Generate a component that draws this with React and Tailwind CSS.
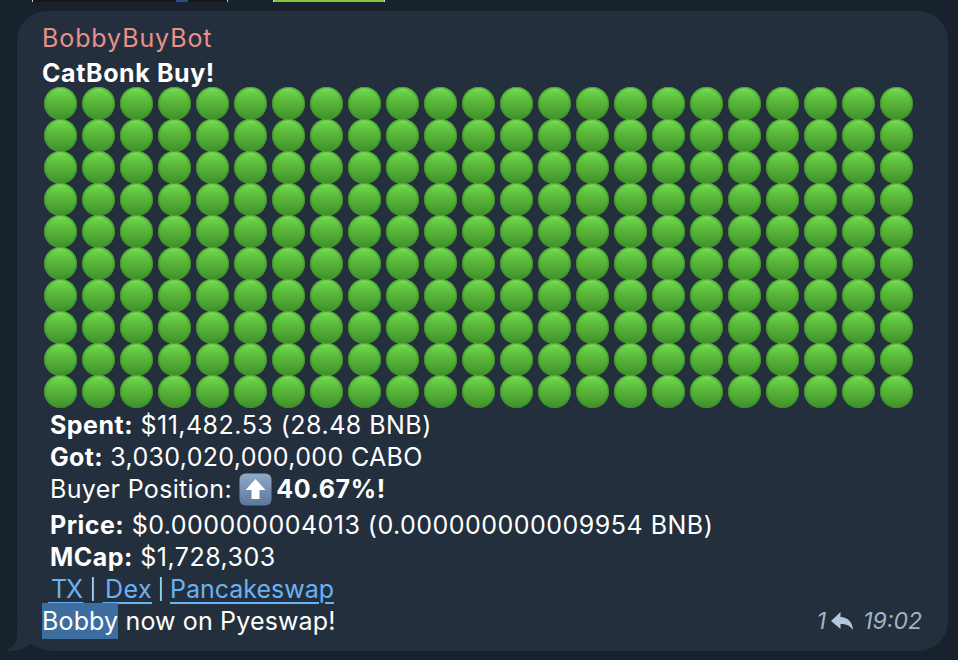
const rows = Array.from({ length: 10 });
const cols = Array.from({ length: 23 });

function GreenDot() {
  return (
    <div className="h-[33px] w-[33px] rounded-full bg-[linear-gradient(#8af06a_0%,#6ad24a_14%,#58b73a_45%,#4ba231_75%,#3f8f2a_100%)] shadow-[inset_0_0_2px_1px_#3f8e2a]" />
  );
}

function UpArrow() {
  return (
    <svg width="33" height="33" viewBox="0 0 33 33" className="shrink-0">
      <defs>
        <linearGradient id="key" x1="0" y1="0" x2="0" y2="1">
          <stop offset="0" stopColor="#8eaac8" />
          <stop offset="1" stopColor="#5c7899" />
        </linearGradient>
      </defs>
      <rect x="0.5" y="0.5" width="32" height="32" rx="6" fill="url(#key)" />
      <path d="M16.5 6 L26.5 17 H20.5 V26 H12.5 V17 H6.5 Z" fill="#fff" />
    </svg>
  );
}

const linkClass = 'text-[#6ab2f2] underline decoration-2 underline-offset-[4px]';

function Pipe({ width }) {
  return <span className={`text-center text-[20px] font-light ${width}`}>|</span>;
}

export default function App() {
  return (
    <div className="relative h-[660px] w-[958px] overflow-hidden bg-[#18222d] font-['Inter',sans-serif] text-[25px] leading-[32px] text-white">
      <div className="flex h-[2px] pl-[32px]">
        <div className="flex w-[196px] border-x border-[#d8d8d8] bg-[#14141a]">
          <div className="ml-[143px] w-[12px] bg-[#2b4a8a]" />
        </div>
        <div className="ml-[45px] w-[112px] border-x border-[#d8d8d8] bg-[#8cc63f]" />
      </div>

      <div className="relative ml-[17px] mt-[9px] h-[640px] w-[931px] rounded-[30px] rounded-bl-[36px] bg-[#242f3d] pl-[25px] pt-[11px]">
        <div className="tracking-[0.9px] text-[#ea8f8a]">BobbyBuyBot</div>
        <div className="mt-[3px] font-bold tracking-[0.6px]">CatBonk Buy!</div>

        <div className="ml-[2px] mt-[-2px] grid grid-cols-[repeat(23,38px)] auto-rows-[32px]">
          {rows.map((_, r) =>
            cols.map((_, c) => <GreenDot key={`${r}-${c}`} />)
          )}
        </div>

        <div className="mt-[2px] pl-[8px] tracking-[0.48px]">
          <div><b className="font-bold">Spent:</b> $11,482.53 (28.48 BNB)</div>
          <div className="tracking-[0.33px]"><b className="font-bold">Got:</b> 3,030,020,000,000 CABO</div>
          <div className="flex h-[36px] items-start tracking-[0.33px]">
            <span className="whitespace-pre">Buyer Position: </span>
            <UpArrow />
            <b className="ml-[4px] font-bold tracking-[0.6px]">40.67%!</b>
          </div>
          <div><b className="font-bold">Price:</b> $0.000000004013 (0.000000000009954 BNB)</div>
          <div><b className="font-bold">MCap:</b> $1,728,303</div>
        </div>

        <div className="ml-[6px] flex h-[32px]">
          <a className={`${linkClass} tracking-[-1px]`}><span className="text-[14px]">&nbsp;</span>TX<span className="text-[8px]">&nbsp;</span></a>
          <Pipe width="w-[19px]" />
          <a className={`${linkClass} tracking-[0.4px]`}><span className="text-[8px]">&nbsp;</span>Dex</a>
          <Pipe width="w-[18px]" />
          <a className={linkClass}>Pancakeswap</a>
        </div>
        <div className="tracking-[0.15px]"><span className="bg-[#3e6d9f] py-[3px]">Bobby</span> now on Pyeswap!</div>

        <div className="absolute bottom-[14px] right-[26px] flex items-center text-[23px] italic text-[#a3b3c6]">
          <span>1</span>
          <svg width="22" height="18" viewBox="0 0 22 18" className="ml-[5px]">
            <path d="M0 9 L9.5 0 V5 C16.5 5 21.5 10 22 18 C19 13.5 15 12 9.5 12 V17 Z" fill="#b4c6dc" />
          </svg>
          <span className="ml-[10px]">19:02</span>
        </div>

        <svg width="44" height="30" viewBox="0 0 44 30" className="absolute bottom-0 left-[-13px]">
          <path d="M1 30 C7 28 12 24 13 16 V0 H27 V22 C23 26 17 29.5 10 29.5 Z" fill="#242f3d" />
        </svg>
      </div>
    </div>
  );
}
